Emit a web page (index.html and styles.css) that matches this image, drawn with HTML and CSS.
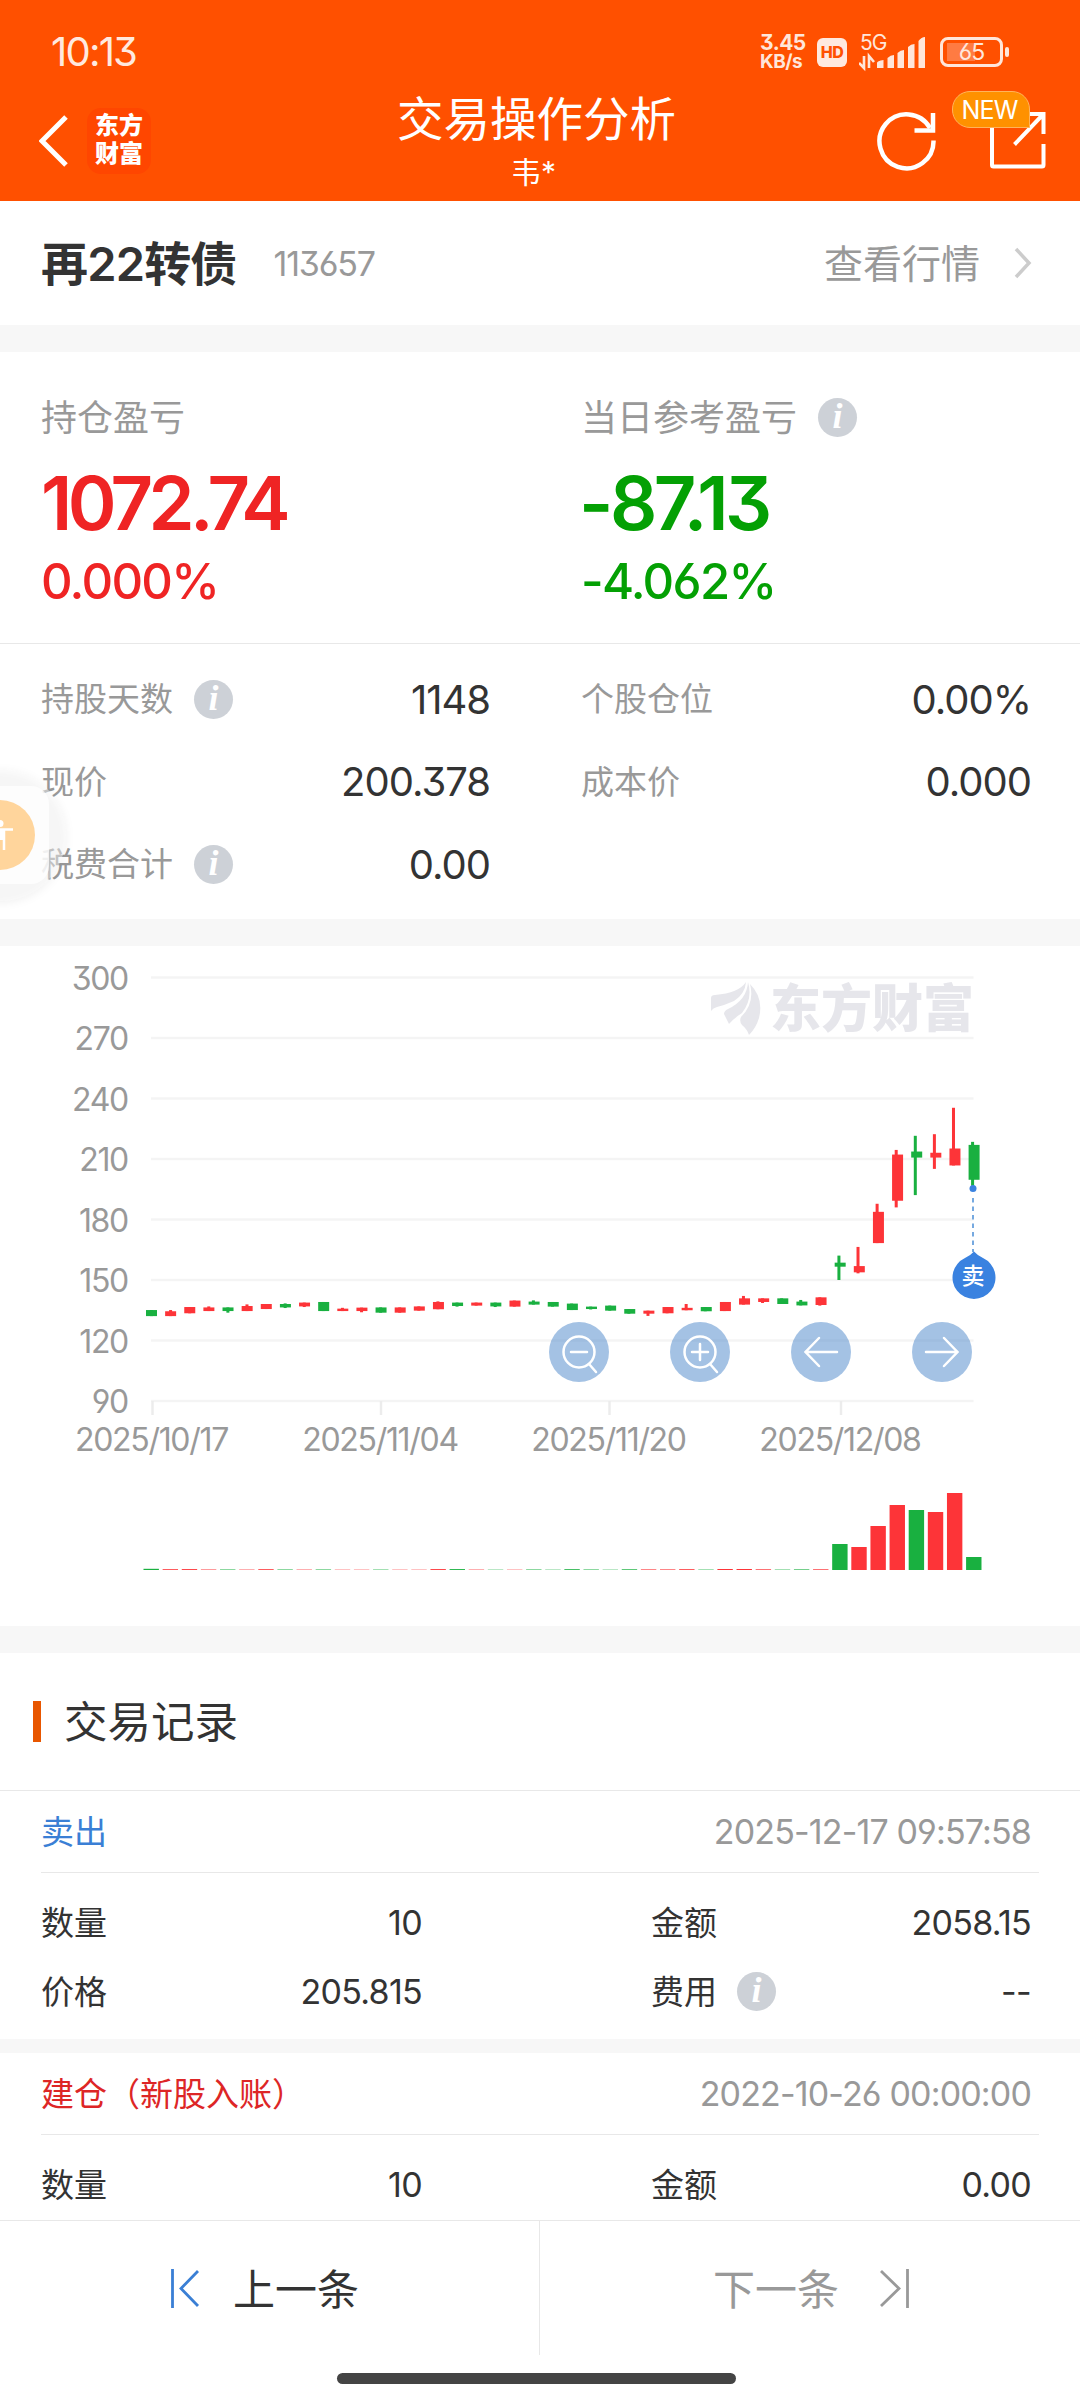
FILE: index.html
```html
<!DOCTYPE html>
<html lang="zh-CN">
<head>
    <meta charset="UTF-8">
    <meta name="viewport" content="width=device-width, initial-scale=1.0">
    <title>交易操作分析</title>
    <link rel="stylesheet" href="styles.css">
</head>
<body>
    <header class="header">
        <div class="status-bar">
            <div class="time">10:13</div>
            <div class="status-icons">
                <div class="net-speed"><span>3.45</span><span class="unit">KB/s</span></div>
                <div class="hd">HD</div>
                <svg class="signal" width="68" height="48" viewBox="0 -6 68 48">
                    <text x="1" y="16">5G</text>
                    <path d="M5 22v12l-5-5M10 34V22l5 6" fill="none" stroke="#ffe6da" stroke-width="2.6"/>
                    <path d="M18 34v-5q0-2 6.500-3v8zM28.500 34v-10q3-3 6.500-3v13zM38.500 34V19q3-3 6.500-3v18zM49 34V13q3-3 6.500-3v24zM59.500 34V7q3-4 6.500-4v31z" fill="#ffe6da"/>
                </svg>
                <div class="battery"><span>65</span></div>
            </div>
        </div>
        <div class="nav-bar">
            <div class="nav-left">
                <svg width="30" height="54" viewBox="0 0 30 54">
                    <path d="M27 3L3 27l24 24" fill="none" stroke="#fff" stroke-width="5"/>
                </svg>
                <div class="app-logo">东方<br>财富</div>
            </div>
            <div class="nav-title">
                <h1>交易操作分析</h1>
                <p>韦*</p>
            </div>
            <div class="nav-right">
                <svg width="60" height="62" viewBox="0 0 60 62">
                    <path d="M56.500 31.500A27 27 0 1 1 53 19" fill="none" stroke="#fff" stroke-width="4.500"/>
                    <path d="M56 4v17.500H37.500" fill="none" stroke="#fff" stroke-width="4.500"/>
                </svg>
                <div class="share">
                    <svg width="56" height="62" viewBox="0 0 56 62">
                        <path d="M2 12v44q0 1.500 1.500 1.500H52q1.500 0 1.500-1.500V35" fill="none" stroke="#fff" stroke-width="4"/>
                        <path d="M36 5h17.500v20M53 5.500L24.500 35.500" fill="none" stroke="#fff" stroke-width="4"/>
                    </svg>
                    <span class="badge">NEW</span>
                </div>
            </div>
        </div>
    </header>

    <main class="content">
        <section class="stock">
            <h2>再22转债</h2>
            <span class="code">113657</span>
            <a class="quote"><span class="cn">查看行情</span>
                <svg width="18" height="32" viewBox="0 0 18 32">
                    <path d="M2 2l13 14L2 30" fill="none" stroke="#ccc" stroke-width="3.500"/>
                </svg>
            </a>
        </section>

        <section class="profit">
            <div class="profit-item up">
                <div class="label"><span class="cn">持仓盈亏</span></div>
                <div class="amount">1072.74</div>
                <div class="percent">0.000%</div>
            </div>
            <div class="profit-item down">
                <div class="label"><span class="cn">当日参考盈亏</span><i class="info">i</i></div>
                <div class="amount">-87.13</div>
                <div class="percent">-4.062%</div>
            </div>
        </section>

        <section class="details">
            <div class="detail"><span class="cn">持股天数</span><i class="info">i</i><b>1148</b></div>
            <div class="detail"><span class="cn">个股仓位</span><b>0.00%</b></div>
            <div class="detail"><span class="cn">现价</span><b>200.378</b></div>
            <div class="detail"><span class="cn">成本价</span><b>0.000</b></div>
            <div class="detail"><span class="cn">税费合计</span><i class="info">i</i><b>0.00</b></div>
            <!-- floating assistant, half hidden at the screen edge -->
            <div class="float-btn">
                <svg width="80" height="150" viewBox="0 -4 80 150">
                    <circle class="halo" cx="0" cy="67" r="66" fill="#fafafa" fill-opacity="0.45"/>
                    <rect x="-49" y="18" width="98" height="98" rx="18" fill="#fff" fill-opacity="0.75"/>
                    <circle cx="0" cy="67" r="35" fill="#ffd59c"/>
                    <circle cx="0" cy="55.500" r="3.500" fill="#fff"/>
                    <path d="M-13 61.500h26M4 61v21M-4 61v21" fill="none" stroke="#fff" stroke-width="2.500"/>
                    <path d="M-4 61h8v11h-8z" fill="#fff"/>
                </svg>
            </div>
        </section>

        <section class="chart">
            <svg id="kline" width="1080" height="680" viewBox="0 946 1080 680">
                <g id="grid"></g>
                <g class="watermark">
                    <path d="M711 998q0-3 4-3 24-2 31-13-1 12-12 19-9 4-17 6-4 1-6 4z"/>
                    <path d="M724 1014q0-3 4-5 19-9 20-27 5 17-6 31-9 6-13 11z"/>
                    <path d="M750 984q14 14 9 34-3 10-10 17-2-6-7-10-3-4-1-8 14-14 9-33z"/>
                    <text x="770" y="1027">东方财富</text>
                </g>
                <g id="candles"></g>
                <g id="volumes"></g>
                <circle cx="973" cy="1188.500" r="3.500" fill="#3a82e0"/>
                <path d="M973 1198v54" stroke="#76a9e0" stroke-width="2" stroke-dasharray="4.500 4"/>
                <path d="M974 1251.500q3 3.500 9 6.500a21.500 21.500 0 1 1-18 0q6-3 9-6.500z" fill="#3a82e0"/>
                <text class="sell" x="973" y="1284">卖</text>
            </svg>
            <div class="chart-tools">
                <button><svg viewBox="0 0 60 60"><circle cx="30" cy="30" r="15.500"/><path d="M22 30h16M40 42l7 8"/></svg></button>
                <button><svg viewBox="0 0 60 60"><circle cx="30" cy="30" r="15.500"/><path d="M22 30h16M30 22v16M40 42l7 8"/></svg></button>
                <button><svg viewBox="0 0 60 60"><path d="M46 30H15M28 16L14.500 30 28 44"/></svg></button>
                <button><svg viewBox="0 0 60 60"><path d="M14 30h31M32 16l13.500 14L32 44"/></svg></button>
            </div>
        </section>

        <h3 class="records-title"><span class="cn">交易记录</span></h3>

        <section class="record">
            <div class="record-head"><span class="cn sell-text">卖出</span><time>2025-12-17 09:57:58</time></div>
            <div class="record-body">
                <div class="cell"><span class="cn">数量</span><b>10</b></div>
                <div class="cell"><span class="cn">金额</span><b>2058.15</b></div>
                <div class="cell"><span class="cn">价格</span><b>205.815</b></div>
                <div class="cell"><span class="cn">费用</span><i class="info">i</i><b>--</b></div>
            </div>
        </section>

        <section class="record">
            <div class="record-head"><span class="cn buy-text">建仓（新股入账）</span><time>2022-10-26 00:00:00</time></div>
            <div class="record-body">
                <div class="cell"><span class="cn">数量</span><b>10</b></div>
                <div class="cell"><span class="cn">金额</span><b>0.00</b></div>
            </div>
        </section>
    </main>

    <footer class="footer">
        <div class="pager">
            <a class="prev">
                <svg width="32" height="40" viewBox="0 0 32 40">
                    <path d="M2.500 1v39M28 3L11 20.500 28 38" fill="none" stroke="#3a7fd5" stroke-width="2.800"/>
                </svg>
                <span class="cn">上一条</span>
            </a>
            <a class="next">
                <span class="cn">下一条</span>
                <svg width="32" height="40" viewBox="0 0 32 40">
                    <path d="M29.500 1v39M3 3l18 17.500L3 38" fill="none" stroke="#999" stroke-width="2.800"/>
                </svg>
            </a>
        </div>
        <div class="home-bar"></div>
    </footer>

    <script>
        // [open, close, low, high, volume]
        const data = [
            [135.1, 132.1, 132.1, 135.1, 1.2], [132.1, 134.5, 132.1, 135.1, 0.8],
            [133.5, 136.6, 133.5, 136.6, 0.9], [134.6, 136.4, 134.6, 136.9, 0.5],
            [136.4, 134.6, 133.8, 136.4, 0.5], [134.6, 137.1, 134.6, 137.9, 0.4],
            [135.6, 138.1, 135.6, 138.1, 0.8], [138.1, 136.4, 136.1, 138.4, 0.5],
            [136.9, 138.8, 136.6, 138.8, 0.4], [139.1, 134.6, 134.6, 139.1, 0.5],
            [134.6, 135.8, 134.6, 136.2, 0.3], [134.6, 136.3, 134.0, 136.3, 0.3],
            [136.4, 133.8, 133.8, 136.4, 0.4], [133.8, 136.4, 133.8, 136.4, 0.3],
            [134.8, 136.9, 134.8, 136.9, 0.3], [135.5, 139.1, 135.5, 139.4, 0.9],
            [138.8, 137.1, 136.8, 138.8, 0.9], [137.3, 138.8, 137.3, 138.8, 0.4],
            [138.8, 136.9, 136.6, 138.8, 0.3], [136.8, 139.8, 136.8, 139.8, 0.3],
            [139.3, 137.8, 137.8, 139.9, 0.5], [139.1, 136.8, 136.8, 139.1, 0.3],
            [138.3, 135.1, 135.1, 138.3, 0.8], [136.8, 135.6, 135.4, 136.8, 0.5],
            [137.3, 134.8, 134.8, 137.3, 0.3], [135.6, 133.3, 133.3, 135.6, 0.7],
            [133.3, 134.8, 132.2, 134.8, 0.6], [133.5, 136.6, 133.5, 136.6, 0.6],
            [135.0, 136.2, 135.0, 138.1, 0.8], [136.6, 134.5, 134.5, 136.6, 0.4],
            [134.6, 139.1, 134.6, 139.1, 1.0], [137.8, 140.9, 137.8, 142.1, 1.0],
            [139.1, 140.9, 138.6, 140.9, 0.7], [140.9, 138.1, 138.1, 140.9, 0.4],
            [139.3, 137.4, 137.4, 140.1, 0.6], [137.6, 141.4, 137.3, 141.4, 0.7],
            [158.6, 156.6, 150.0, 162.1, 26], [153.8, 156.9, 153.3, 166.4, 23],
            [168.3, 183.8, 168.3, 187.8, 44], [189.3, 212.2, 186.0, 214.5, 65],
            [213.7, 210.7, 192.1, 221.5, 60], [210.7, 213.1, 205.1, 222.3, 58],
            [206.8, 215.2, 206.8, 235.4, 77], [217.0, 199.7, 196.7, 218.5, 13]
        ];
        const dates = [['2025/10/17', 152.5], ['2025/11/04', 381], ['2025/11/20', 609.5], ['2025/12/08', 841]];
        const RED = '#fd3438';
        const GREEN = '#19b040';

        function priceY(price) {
            return 977.5 + (300 - price) * 60.5 / 30;
        }

        function rect(x, y, w, h, color) {
            return `<rect x="${x}" y="${y}" width="${w}" height="${h}" fill="${color}"/>`;
        }

        let grid = '';
        for (let p = 300; p >= 90; p -= 30) {
            const y = priceY(p);
            grid += rect(151, y - 1.2, 822.5, 2.4, '#f4f4f4');
            grid += `<text class="axis-y" x="128" y="${y + 12}">${p}</text>`;
        }
        dates.forEach(([text, x]) => {
            grid += rect(x - 1.2, 1401, 2.4, 14, '#ececec');
            grid += `<text class="axis-x" x="${x - 1}" y="1451">${text}</text>`;
        });
        document.getElementById('grid').innerHTML = grid;

        let candles = '';
        let volumes = '';
        data.forEach(([open, close, low, high, vol], i) => {
            const x = 151.5 + i * 19.13;
            const color = close > open ? RED : GREEN;
            const top = priceY(Math.max(open, close));
            const bottom = priceY(Math.min(open, close));
            candles += rect(x - 1.5 - i * 0.035, priceY(high), 3, priceY(low) - priceY(high), color);
            candles += rect(x - 5.5, top, 11, bottom - top, color);
            volumes += rect(x - 8, 1570 - vol, 15.4, vol, color);
        });
        document.getElementById('candles').innerHTML = candles;
        document.getElementById('volumes').innerHTML = volumes;
    </script>
</body>
</html>
```
FILE: styles.css
```css
* {
    box-sizing: border-box;
    margin: 0;
    padding: 0;
}

body {
    width: 1080px;
    height: 2400px;
    overflow: hidden;
    display: flex;
    flex-direction: column;
    background-color: #fff;
    color: #333;
    font-family: Inter, "Noto Sans CJK SC", sans-serif;
    font-feature-settings: "cv03", "cv04", "cv09";
}

svg {
    display: block;
}

b, h1, h2, h3, i {
    font-weight: 400;
    font-style: normal;
}

/* lifts chinese text onto the optical center of its row */
.cn {
    padding-bottom: 4px;
}

/* header */
.header {
    height: 201px;
    background-color: #ff5000;
    color: #fff;
}

.status-bar {
    height: 81px;
    padding: 24px 71px 0 51px;
    display: flex;
    justify-content: space-between;
}

.time {
    font-size: 40px;
    line-height: 56px;
    letter-spacing: -1.8px;
    color: #ffe9df;
}

.status-icons {
    display: flex;
    align-items: center;
    height: 56px;
    color: #ffe6da;
}

.net-speed {
    width: 57px;
    font-size: 21px;
    line-height: 19px;
    font-weight: 700;
    display: flex;
    flex-direction: column;
    letter-spacing: -0.5px;
}

.unit {
    font-size: 19px;
}

.hd {
    width: 30px;
    height: 29px;
    border-radius: 6px;
    background-color: #ffe9df;
    color: #ff5000;
    font-size: 16px;
    font-weight: 800;
    line-height: 29px;
    text-align: center;
    letter-spacing: -0.5px;
}

.signal {
    margin: 0 13px 0 12px;
}

.signal text {
    font-size: 21px;
    fill: #ffe6da;
    letter-spacing: -1px;
}

.battery {
    position: relative;
    width: 63px;
    height: 30px;
    margin-right: 6px;
    border: 3px solid #ffe6da;
    border-radius: 8px;
    font-size: 23px;
    line-height: 25px;
    text-align: center;
    letter-spacing: -1px;
    background: linear-gradient(#ff7b42, #ff7b42) 4px 3px / 28px 18px no-repeat;
}

.battery::after {
    content: "";
    position: absolute;
    right: -9px;
    top: 7px;
    width: 4px;
    height: 10px;
    border-radius: 2px;
    background-color: #ffe6da;
}

.nav-bar {
    height: 120px;
    padding: 0 34px 0 39px;
    display: grid;
    grid-template-columns: 357px 281px 1fr;
}

.nav-left {
    display: flex;
    gap: 18px;
    height: 120px;
    align-items: center;
}

.app-logo {
    width: 64px;
    height: 66px;
    border-radius: 14px;
    padding-top: 4px;
    background-color: #ff4600;
    font-size: 24px;
    line-height: 28px;
    font-weight: 800;
    text-align: center;
}

.nav-title {
    text-align: center;
}

.nav-title h1 {
    font-size: 46.5px;
    line-height: 68px;
    margin-top: 4px;
    white-space: nowrap;
}

.nav-title p {
    font-size: 30px;
    line-height: 38px;
    padding-right: 6px;
}

.nav-right {
    display: flex;
    justify-content: flex-end;
    gap: 53px;
    padding-top: 28px;
}

.share {
    position: relative;
}

.badge {
    position: absolute;
    left: -38px;
    top: -18px;
    width: 78px;
    height: 37px;
    border: 1px solid #ffb35c;
    border-radius: 18px 18px 0 18px;
    background-color: #ff9100;
    font-size: 25px;
    line-height: 36px;
    text-align: center;
    padding-right: 3px;
    letter-spacing: -0.8px;
}

/* stock name row */
.stock {
    height: 124px;
    padding: 0 48px 0 41px;
    display: flex;
    align-items: center;
}

.stock h2 {
    font-size: 47px;
    font-weight: 600;
    letter-spacing: -0.8px;
    padding-bottom: 6px;
}

.code {
    margin-left: 37px;
    font-size: 34px;
    color: #999;
    letter-spacing: -1.2px;
}

.quote {
    margin-left: auto;
    display: flex;
    align-items: center;
    gap: 34px;
    font-size: 39px;
    color: #999;
}

.info {
    width: 39px;
    height: 39px;
    border-radius: 50%;
    background-color: #cdd1d7;
    color: #fff;
    font: italic 700 36px/37px "Liberation Serif", serif;
    text-align: center;
}

/* profit */
.profit {
    height: 319px;
    border-top: 27px solid #f7f7f7;
    border-bottom: 1px solid #e8e8e8;
    padding: 36px 41px 0;
    display: grid;
    grid-template-columns: 540px 1fr;
}

.label {
    display: flex;
    align-items: center;
    gap: 21px;
    height: 58px;
    font-size: 36px;
    color: #999;
}

.amount {
    font-size: 74px;
    font-weight: 600;
    line-height: 84px;
    margin-top: 15px;
    letter-spacing: -4.6px;
}

.percent {
    font-size: 49px;
    font-weight: 500;
    line-height: 60px;
    margin-top: 7px;
    letter-spacing: -1.700px;
}

.up {
    color: #ef2424;
}

.down {
    color: #04a004;
}

.down .amount {
    letter-spacing: -3.500px;
    margin-left: -2px;
}

/* holding details */
.details {
    position: relative;
    height: 275px;
    padding: 14px 49px 0 41px;
    display: grid;
    grid-template-columns: 449px 450px;
    column-gap: 91px;
    grid-auto-rows: 82.5px;
}

.detail {
    display: flex;
    align-items: center;
    font-size: 33px;
    color: #999;
}

.detail .info {
    margin-left: 21px;
}

.cell .info {
    margin-left: 20px;
}

.detail b {
    margin-left: auto;
    font-size: 40px;
    color: #333;
    letter-spacing: -1px;
}

.float-btn {
    position: absolute;
    left: 0;
    top: 120px;
}

.halo {
    filter: drop-shadow(0 2px 4px rgba(0, 0, 0, 0.12));
}

/* chart */
.chart {
    position: relative;
    height: 707px;
    border-top: 27px solid #f7f7f7;
}

.axis-y,
.axis-x {
    font-size: 32px;
    fill: #999;
    letter-spacing: -1.3px;
}

.axis-y {
    text-anchor: end;
}

.axis-x {
    text-anchor: middle;
}

.watermark {
    fill: #e6e6eb;
}

.watermark text {
    font-size: 51px;
    font-weight: 900;
}

.sell {
    font-size: 23px;
    font-weight: 500;
    fill: #fff;
    text-anchor: middle;
}

.chart-tools {
    position: absolute;
    left: 549px;
    top: 376px;
    display: flex;
    gap: 61px;
}

.chart-tools button {
    width: 60px;
    height: 60px;
    border: none;
    border-radius: 50%;
    background-color: rgba(74, 133, 201, 0.5);
}

.chart-tools svg {
    fill: none;
    stroke: #fff;
    stroke-width: 2.500;
    stroke-linecap: round;
}

/* records */
.records-title {
    height: 165px;
    border-top: 27px solid #f7f7f7;
    border-bottom: 1px solid #e8e8e8;
    padding-left: 33px;
    display: flex;
    align-items: center;
    font-size: 43.500px;
}

.records-title::before {
    content: "";
    width: 8px;
    height: 41px;
    margin-right: 23px;
    background-color: #e85600;
}

.record {
    height: 262px;
    padding: 0 41px;
    border-bottom: 14px solid #f7f7f7;
}

.record-head {
    height: 82px;
    border-bottom: 1px solid #e8e8e8;
    padding-right: 8px;
    display: flex;
    align-items: center;
    justify-content: space-between;
    font-size: 33px;
}

.record-head time {
    color: #999;
    font-size: 34px;
    letter-spacing: -0.850px;
}

.sell-text {
    color: #3a7fd5;
}

.buy-text {
    color: #dd2626;
}

.record-body {
    display: grid;
    grid-template-columns: 381px 380px;
    column-gap: 229px;
    grid-auto-rows: 69px;
    padding-top: 15px;
}

.cell {
    display: flex;
    align-items: center;
    font-size: 33px;
}

.cell b {
    margin-left: auto;
    font-size: 34px;
    letter-spacing: -0.700px;
}

/* footer */
.content {
    height: 2019px;
    overflow: hidden;
}

.footer {
    flex: 1;
    border-top: 1px solid #e8e8e8;
    background-color: #fff;
}

.pager {
    height: 134px;
    display: flex;
    font-size: 42px;
}

.pager a {
    width: 540px;
    display: flex;
    align-items: center;
}

.prev {
    gap: 31px;
    padding-left: 170px;
    border-right: 1px solid #e8e8e8;
}

.next {
    gap: 39px;
    padding-left: 173px;
    color: #999;
}

.home-bar {
    width: 399px;
    height: 11px;
    margin: 18px auto 0 337px;
    border-radius: 6px;
    background-color: #444;
}
```
